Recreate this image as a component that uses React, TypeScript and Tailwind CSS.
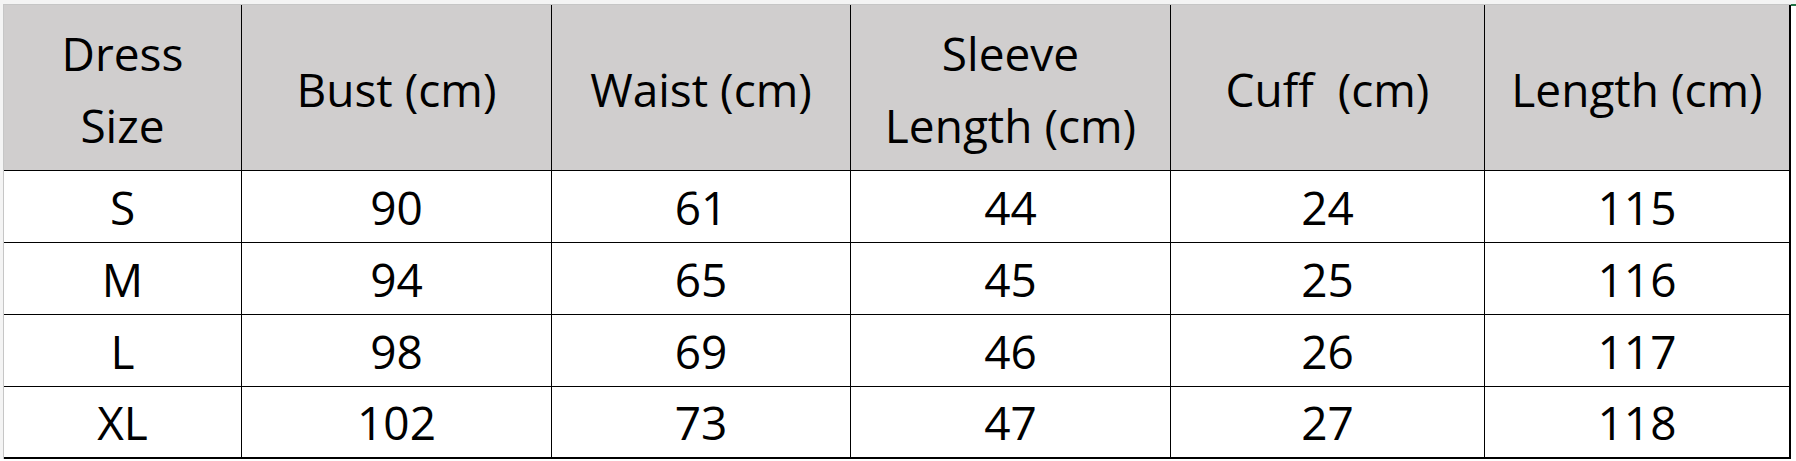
import React from "react";

const widths = ["w-[238px]", "w-[310px]", "w-[299px]", "w-[320px]", "w-[314px]", "w-[306px]"];

const headers: string[][] = [
  ["Dress", "Size"],
  ["Bust (cm)"],
  ["Waist (cm)"],
  ["Sleeve", "Length (cm)"],
  ["Cuff  (cm)"],
  ["Length (cm)"],
];

const rows: string[][] = [
  ["S", "90", "61", "44", "24", "115"],
  ["M", "94", "65", "45", "25", "116"],
  ["L", "98", "69", "46", "26", "117"],
  ["XL", "102", "73", "47", "27", "118"],
];

function borderFor(i: number) {
  return i === 5 ? "border-r-2 border-black" : "border-r border-black";
}

export default function App() {
  return (
    <div
      className="w-[1796px] h-[461px] bg-white overflow-hidden flex flex-col"
      style={{ fontFamily: '"Open Sans", "Noto Sans", sans-serif' }}
    >
      <div className="h-[4px] bg-[#f4f4f4] w-full" />
      <div className="flex">
        <div className="w-[4px] bg-[#f4f4f4]" />
        <div className="flex flex-col border-t border-l border-[#c6c6c6]">
          <div className="flex h-[166px] border-b border-black bg-[#d0cece]">
            {headers.map((h, i) => (
              <div
                key={i}
                className={`${widths[i]} ${borderFor(i)} h-full flex flex-col items-center justify-center pt-[3px] text-[46px] leading-[72px] text-black whitespace-pre`}
              >
                {h.map((line, j) => (
                  <span key={j}>{line}</span>
                ))}
              </div>
            ))}
          </div>
          {rows.map((r, ri) => (
            <div
              key={ri}
              className={`flex h-[72px] bg-white ${ri === 3 ? "border-b-2" : "border-b"} border-black`}
            >
              {r.map((c, i) => (
                <div
                  key={i}
                  className={`${widths[i]} ${borderFor(i)} h-full flex items-center justify-center text-[46px] leading-[72px] text-black`}
                >
                  {c}
                </div>
              ))}
            </div>
          ))}
        </div>
        <div className="flex-1 flex flex-col">
          <div className="h-[2px] w-[5px] bg-[#217346]" />
        </div>
      </div>
    </div>
  );
}
